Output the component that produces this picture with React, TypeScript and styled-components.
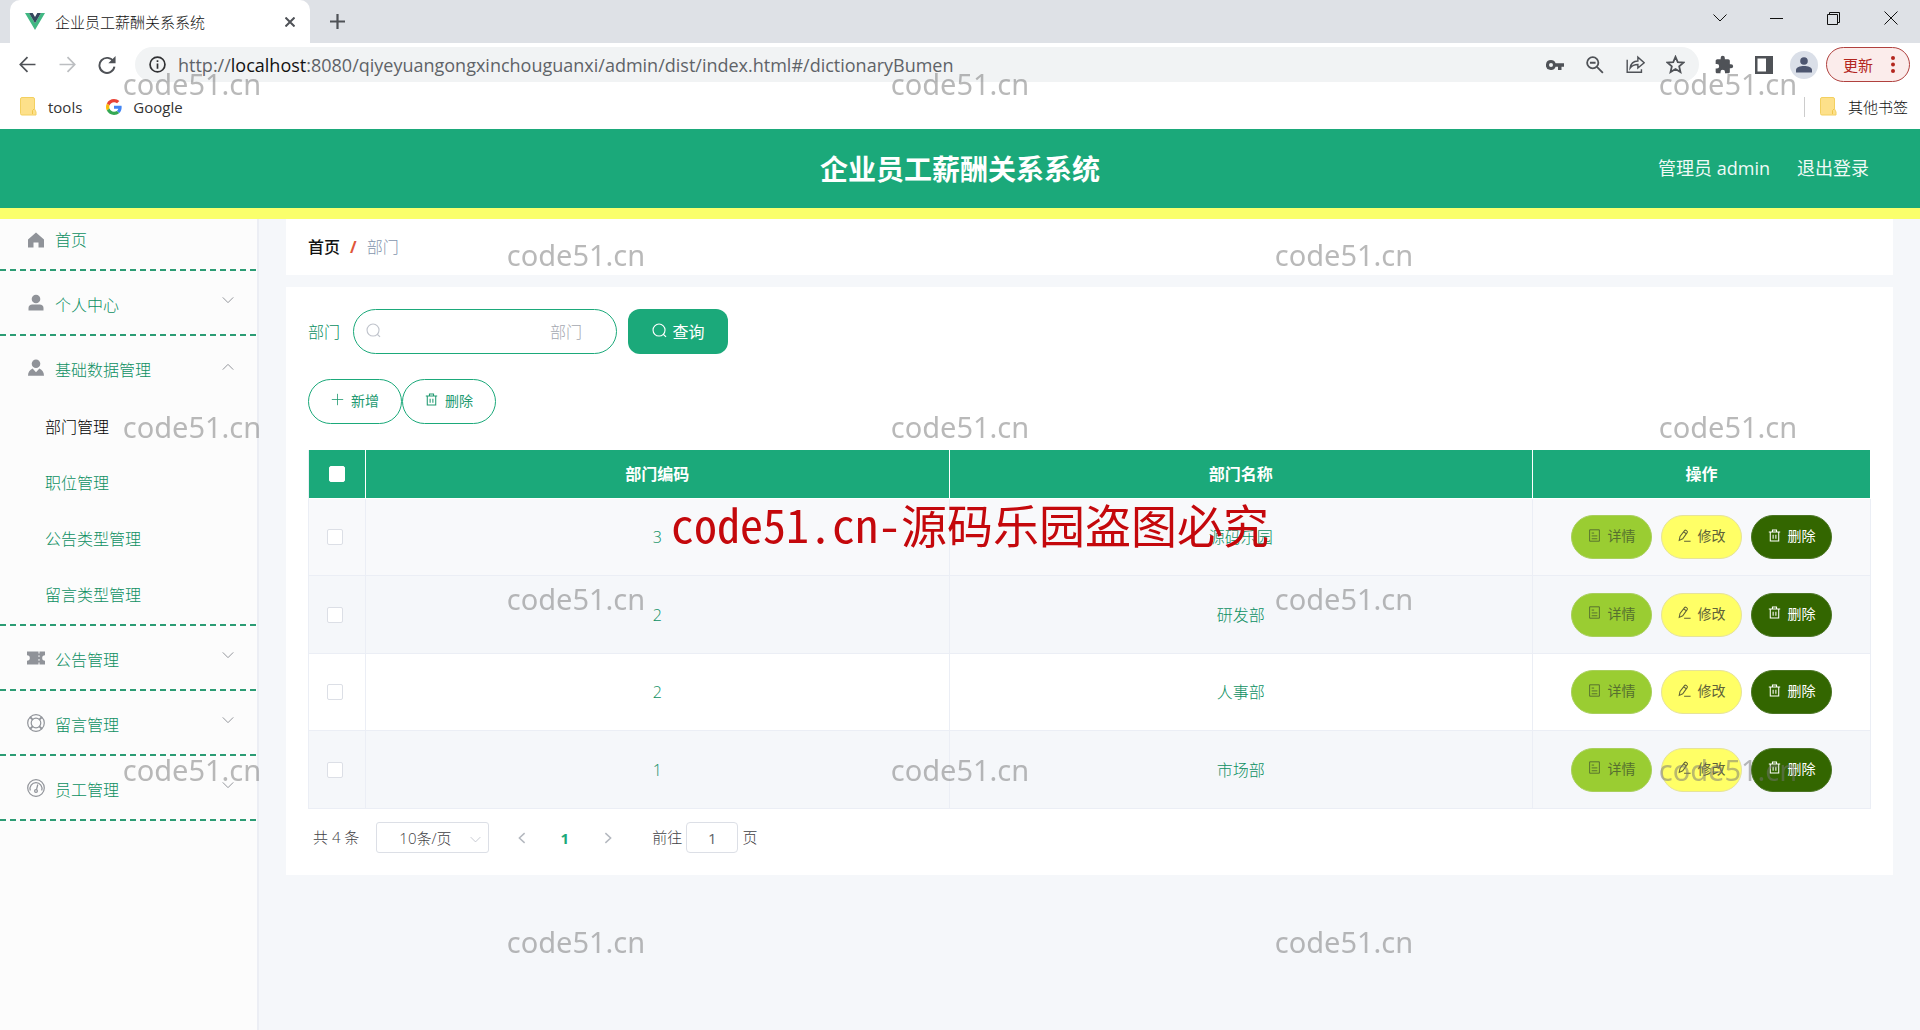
import React from "react";
import styled, { createGlobalStyle, css } from "styled-components";

const GREEN = "#1ba97a";
const TEXT_GREEN = "#0c8f62";
const FONT = '"Open Sans", "Noto Sans CJK SC", sans-serif';

const GlobalStyle = createGlobalStyle`
  *, *::before, *::after { box-sizing: border-box; }
  body { margin: 0; font-family: ${FONT}; font-size: 16px; color: #303133; background: #f5f7fa; }
  button, input, select { font-family: inherit; }
  button { cursor: pointer; padding: 0; border: 0; background: none; color: inherit; }
  a { color: inherit; text-decoration: none; }
  svg { display: block; flex: none; }
`;

const Page = styled.div`
  min-height: 100vh;
  display: flex;
  flex-direction: column;
  line-height: 24px;
`;

/* ---------- browser window ---------- */

const TabStrip = styled.div`
  display: flex;
  height: 43px;
  padding-left: 10px;
  background: #dee1e6;
`;

const Tab = styled.div`
  display: flex;
  align-items: center;
  width: 300px;
  padding: 0 12px 0 15px;
  gap: 10px;
  border-radius: 10px 10px 0 0;
  background: #fff;
`;

const TabTitle = styled.span`
  flex: 1;
  font-size: 15px;
  font-weight: 300;
  color: #111;
`;

const IconButton = styled.button<{ $w?: number; $color?: string }>`
  display: flex;
  align-items: center;
  justify-content: center;
  width: ${(p) => p.$w ?? 40}px;
  color: ${(p) => p.$color ?? "#4f5257"};
`;

const WindowButtons = styled.div`
  display: flex;
  height: 36px;
  margin-left: auto;
`;

const Toolbar = styled.div`
  display: flex;
  align-items: center;
  height: 45px;
  padding: 0 10px 2px 7px;
  background: #fff;
`;

const AddressBar = styled.div`
  display: flex;
  flex: 1;
  align-items: center;
  height: 35px;
  margin: 0 5px 0 8px;
  padding: 0 4px 0 14px;
  gap: 12px;
  border-radius: 18px;
  background: #f1f3f4;
`;

const Url = styled.div`
  flex: 1;
  font-size: 18px;
  color: #5f6368;
  white-space: nowrap;

  b { font-weight: 400; color: #111; }
`;

const AddressIcons = styled.div`
  display: flex;
`;

const Avatar = styled.span`
  display: grid;
  place-items: center;
  width: 28px;
  height: 28px;
  border-radius: 50%;
  background: #dadfe8;
  color: #4d5670;
`;

const UpdateButton = styled.button`
  display: flex;
  align-items: center;
  justify-content: space-between;
  width: 84px;
  height: 35px;
  margin-left: 2px;
  padding: 0 14px 0 16px;
  border: 1px solid #b0413e;
  border-radius: 18px;
  background: #fbeceb;
  color: #b3261e;
  font-size: 15px;
`;

const Bookmarks = styled.nav`
  display: flex;
  align-items: center;
  height: 41px;
  padding: 0 12px 4px 20px;
  gap: 24px;
  background: #fff;
`;

const Bookmark = styled.a<{ $last?: boolean }>`
  display: flex;
  align-items: center;
  gap: 11px;
  font-size: 15px;
  color: #333;
  ${(p) =>
    p.$last &&
    css`
      margin-left: auto;
      padding-left: 15px;
      border-left: 1px solid #ccc;
      font-weight: 300;
      line-height: 20px;
      color: #111;
    `}
`;

/* ---------- application ---------- */

const Header = styled.header`
  display: grid;
  grid-template-columns: 1fr auto 1fr;
  align-items: center;
  height: 90px;
  padding: 0 51px;
  border-bottom: 11px solid #faff6b;
  background: ${GREEN};
  color: #fff;
`;

const Title = styled.h1`
  grid-column: 2;
  margin: 0;
  font-size: 28px;
  line-height: 40px;
  font-weight: 700;
`;

const Account = styled.div`
  display: flex;
  justify-content: flex-end;
  padding-bottom: 2px;
  gap: 27px;
  font-size: 18px;
  line-height: 28px;
  color: #effaf6;
`;

const Body = styled.div`
  display: flex;
  flex: 1;
`;

const Sidebar = styled.nav`
  width: 259px;
  border-right: 2px solid #eceef4;
  background: #fcfcfc;
  color: ${TEXT_GREEN};
  font-weight: 300;
`;

const MenuGroup = styled.div`
  padding-bottom: 2px;
  background: repeating-linear-gradient(90deg, #2c9c74 0 6px, transparent 6px 10px) bottom left / 100% 2px no-repeat;
`;

const entry = css`
  display: flex;
  align-items: center;
  width: 100%;
  padding: 0 23px 0 26px;
  gap: 9px;
  font-size: 16px;
  font-weight: 300;
  text-align: left;
`;

const HomeLink = styled.a`
  ${entry}
  height: 50px;
  padding-bottom: 8px;
`;

const MenuButton = styled.button`
  ${entry}
  height: 63px;
`;

const MenuIcon = styled.span`
  color: #909399;
`;

const MenuText = styled.span`
  flex: 1;
  padding-top: 2px;
`;

const Caret = styled.span<{ $open?: boolean }>`
  padding-bottom: ${(p) => (p.$open ? 2 : 6)}px;
  color: #909399;
`;

const SubMenu = styled.div`
  padding-bottom: 1px;
`;

const SubLink = styled.a<{ $active?: boolean }>`
  display: block;
  padding-left: 45px;
  line-height: 56px;
  ${(p) => p.$active && "color: #000;"}
`;

const Main = styled.main`
  flex: 1;
  min-width: 0;
  padding: 0 27px;
`;

const Crumbs = styled.nav`
  display: flex;
  align-items: center;
  height: 56px;
  margin-bottom: 12px;
  padding: 0 22px;
  gap: 10px;
  background: #fff;

  a { font-weight: 500; color: #111; }
  i { font-style: normal; font-weight: 700; color: #e0563a; }
  span { font-weight: 300; color: #8495ad; }
`;

const Card = styled.section`
  padding: 22px;
  background: #fff;
`;

const SearchForm = styled.form`
  display: flex;
  align-items: center;
  height: 45px;
  margin-bottom: 25px;
`;

const FieldLabel = styled.label`
  margin-right: 13px;
  color: ${TEXT_GREEN};
  font-weight: 300;
`;

const Field = styled.div`
  position: relative;
  width: 264px;
  margin-right: 11px;
  color: #c0c4cc;

  svg { position: absolute; left: 13px; top: 14px; }
`;

const SearchInput = styled.input`
  width: 100%;
  height: 45px;
  padding: 0 34px;
  border: 1px solid ${GREEN};
  border-radius: 23px;
  background: transparent;
  font-size: 16px;
  text-align: right;
  outline: 0;

  &::placeholder { color: #a4a8b0; font-weight: 300; }
`;

const QueryButton = styled.button`
  display: flex;
  align-items: center;
  justify-content: center;
  width: 100px;
  height: 45px;
  padding-bottom: 2px;
  gap: 6px;
  border-radius: 12px;
  background: ${GREEN};
  color: #fff;
  font-size: 16px;
`;

const Actions = styled.div`
  display: flex;
  margin-bottom: 26px;
`;

const OutlineButton = styled.button`
  display: flex;
  align-items: center;
  justify-content: center;
  width: 94px;
  height: 45px;
  padding-bottom: 4px;
  gap: 7px;
  border: 1px solid ${GREEN};
  border-radius: 23px;
  background: #fff;
  color: #219a71;
  font-size: 14px;
`;

const Table = styled.table`
  width: 100%;
  table-layout: fixed;
  border-collapse: separate;
  border-spacing: 0;
  border-left: 1px solid #ebeef5;
  text-align: center;
`;

const HeadCell = styled.th<{ $w?: number }>`
  width: ${(p) => (p.$w ? `${p.$w}px` : "auto")};
  height: 49px;
  padding: 0;
  border-right: 1px solid #fff;
  border-bottom: 1px solid #fff;
  background: ${GREEN};
  color: #fff;
  font-weight: 700;
`;

const Cell = styled.td`
  height: 77px;
  padding: 0;
  border-right: 1px solid #ebeef5;
  border-bottom: 1px solid #ebeef5;
  color: ${TEXT_GREEN};
  font-weight: 300;
`;

const Row = styled.tr<{ $bg: string }>`
  background: ${(p) => p.$bg};

  &:nth-child(even) ${Cell} { height: 78px; }
`;

const Check = styled.input`
  appearance: none;
  display: block;
  width: 16px;
  height: 16px;
  margin: 0 0 0 18px;
  border: 1px solid #dcdfe6;
  border-radius: 2px;
  background: #fff;

  th & { margin-left: 20px; border-color: #fff; }
`;

const RowActions = styled.div`
  display: flex;
  justify-content: center;
  gap: 9px;
`;

const PillButton = styled.button<{ $bg: string; $fg: string; $line: string }>`
  display: flex;
  align-items: center;
  justify-content: center;
  width: 81px;
  height: 44px;
  padding-bottom: 4px;
  gap: 7px;
  border: 1px solid ${(p) => p.$line};
  border-radius: 22px;
  background: ${(p) => p.$bg};
  color: ${(p) => p.$fg};
  font-size: 14px;
`;

const Pagination = styled.div`
  display: flex;
  align-items: center;
  margin-top: 13px;
  padding-left: 5px;
  font-size: 15px;
  line-height: 31px;
  color: #3f4144;
  font-weight: 300;
`;

const SizeSelect = styled.div`
  position: relative;
  width: 113px;
  margin: 0 11px 0 17px;
  color: #c0c4cc;

  select {
    appearance: none;
    display: block;
    width: 100%;
    height: 31px;
    padding: 0 22px;
    border: 1px solid #dcdfe6;
    border-radius: 3px;
    background: #fff;
    color: #3f4144;
    font-size: 15px;
    font-weight: 300;
  }
  svg { position: absolute; right: 8px; top: 12px; }
`;

const PageButton = styled.button<{ $active?: boolean }>`
  display: flex;
  align-items: center;
  justify-content: center;
  width: 43px;
  height: 31px;
  color: ${(p) => (p.$active ? GREEN : "#b4b8bf")};
  font-size: 15px;
  font-weight: 700;
`;

const JumpLabel = styled.label`
  display: flex;
  align-items: center;
  margin-left: 23px;
  gap: 4px;

  input {
    width: 52px;
    height: 31px;
    border: 1px solid #dcdfe6;
    border-radius: 4px;
    text-align: center;
    color: #606266;
    font-size: 15px;
  }
`;

/* ---------- watermark ---------- */

const Watermark = styled.div`
  position: fixed;
  inset: -2px 0 2px;
  display: grid;
  grid-template: repeat(6, 1fr) / repeat(5, 1fr);
  place-items: center;
  pointer-events: none;
  font-family: "Noto Sans", sans-serif;
  font-size: 29px;
  color: rgba(115, 115, 115, 0.5);
`;

const Notice = styled.div`
  position: fixed;
  inset: 16px 0 0 20px;
  display: flex;
  align-items: center;
  justify-content: center;
  pointer-events: none;
  font-family: "Noto Sans Mono CJK SC", "Noto Sans CJK SC", monospace;
  font-size: 46px;
  color: #c4080c;
`;

/* ---------- icons ---------- */

type IconProps = { size?: number; width?: number; fill?: boolean; box?: number; children: React.ReactNode };

const Icon = ({ size = 16, width = 1, fill, box = 16, children }: IconProps) => (
  <svg
    width={size}
    height={size}
    viewBox={`0 0 ${box} ${box}`}
    fill={fill ? "currentColor" : "none"}
    stroke={fill ? "none" : "currentColor"}
    strokeWidth={width}
    aria-hidden="true"
  >
    {children}
  </svg>
);

const SearchIcon = () => (
  <Icon size={15} width={1.2}>
    <circle cx="7.5" cy="7.5" r="6.4" />
    <path d="M12 12l3 2.8" />
  </Icon>
);

const TrashIcon = () => (
  <Icon size={13} width={1.3}>
    <path d="M1 3.8h14M5.5 3.5V1.2h5v2.3M2.8 3.8v11h10.4v-11M6.3 7v5M9.7 7v5" />
  </Icon>
);

const DetailIcon = () => (
  <Icon size={13} width={1.2}>
    <path d="M2 1h12v14H2zM4.5 5h3M4.5 8.500h7M4.500 12h7" />
  </Icon>
);

const EditIcon = () => (
  <Icon size={13} width={1.3}>
    <path d="M1.500 14l1-4.800L8.300 1.700c.8-1 4 1.200 3.200 2.400L5.800 12l-4.300 2zM7.500 15h8M7 3.500l3.200 2.300" />
  </Icon>
);

const CaretIcon = ({ up, size = 12 }: { up?: boolean; size?: number }) => (
  <Icon size={size} width={1.3}>
    <path d={up ? "M1 11.500L8 4.500l7 7" : "M1 4.500l7 7 7-7"} />
  </Icon>
);

const Folder = () => (
  <svg width="17" height="19" viewBox="0 0 17 19" aria-hidden="true">
    <path d="M2 .5h11a1.500 1.500 0 0 1 1.500 1.500v10l1.500 3v3H2A1.500 1.500 0 0 1 .5 16.500V2A1.500 1.500 0 0 1 2 .5z" fill="#fde08a" stroke="#f3d060" />
    <path d="M12.500 17v-3.500l1.500-1.500" fill="none" stroke="#efc64a" />
  </svg>
);

const VueLogo = () => (
  <svg width="20" height="17" viewBox="0 0 20 17" aria-hidden="true">
    <path d="M0 0h4l6 10.300L16 0h4L10 17z" fill="#41b883" />
    <path d="M4 0h3.700L10 4l2.300-4H16l-6 10.300z" fill="#34495e" />
  </svg>
);

const GoogleLogo = () => (
  <svg width="16" height="16" viewBox="0 0 48 48" aria-hidden="true">
    <path fill="#EA4335" d="M24 9.500c3.540 0 6.710 1.220 9.210 3.600l6.850-6.850C35.900 2.380 30.470 0 24 0 14.620 0 6.510 5.380 2.560 13.220l7.980 6.190C12.430 13.720 17.740 9.500 24 9.500z" />
    <path fill="#4285F4" d="M46.980 24.550c0-1.570-.15-3.090-.38-4.550H24v9.020h12.940c-.58 2.960-2.260 5.480-4.780 7.180l7.730 6c4.510-4.180 7.090-10.360 7.090-17.650z" />
    <path fill="#FBBC05" d="M10.530 28.590c-.48-1.450-.76-2.990-.76-4.590s.27-3.140.76-4.590l-7.980-6.190C.92 16.460 0 20.120 0 24c0 3.880.92 7.540 2.560 10.780l7.970-6.190z" />
    <path fill="#34A853" d="M24 48c6.480 0 11.930-2.130 15.890-5.810l-7.730-6c-2.150 1.450-4.920 2.300-8.160 2.300-6.260 0-11.570-4.220-13.470-9.910l-7.980 6.190C6.510 42.620 14.620 48 24 48z" />
  </svg>
);

const menuIcons = {
  home: (
    <Icon size={20} box={20} fill>
      <path d="M10 2.500l8 7V17.500h-5.500v-5h-5v5H2v-8z" />
    </Icon>
  ),
  user: (
    <Icon size={20} box={20} fill>
      <circle cx="10" cy="6" r="4.300" />
      <path d="M2.500 17.500v-2.500c0-2.200 1.600-3.500 3.800-3.500h7.400c2.200 0 3.800 1.300 3.800 3.500v2.500z" />
    </Icon>
  ),
  custom: (
    <Icon size={20} box={20} fill>
      <circle cx="10" cy="5.800" r="4.300" />
      <path d="M2 17.800c0-3.600 1.800-5.900 4.600-7.300L10 14.300l3.400-3.800c2.800 1.400 4.600 3.700 4.600 7.300z" />
    </Icon>
  ),
  ticket: (
    <Icon size={20} box={20} fill>
      <path d="M1 3.500h11.500v2h1v-2H19v3.700a2.800 2.800 0 0 0 0 5.600v3.700h-5.500v-2h-1v2H1v-3.700a2.800 2.800 0 0 0 0-5.600zM12.500 7.300v1.800h1V7.300zM12.500 11v1.800h1V11z" />
    </Icon>
  ),
  help: (
    <Icon size={20} box={20} width={1.200}>
      <circle cx="10" cy="10" r="8.300" />
      <circle cx="10" cy="10" r="4.800" />
      <path d="M4 4.500l2.500 2.300M4.500 4l2.300 2.500M16 4.500l-2.500 2.300M15.500 4l-2.300 2.500M4 15.500l2.500-2.300M4.500 16l2.300-2.500M16 15.500l-2.500-2.300M15.500 16l-2.300-2.500" />
    </Icon>
  ),
  meter: (
    <Icon size={20} box={20} width={1.200}>
      <circle cx="10" cy="10" r="8.300" />
      <path d="M4.300 12.500a6 6 0 1 1 11.400 0" />
      <path d="M11.800 6.500l-1.300 5.200" />
      <circle cx="10" cy="13" r="1.400" />
    </Icon>
  ),
};

/* ---------- data ---------- */

type MenuItem = { icon: keyof typeof menuIcons; text: string; children?: string[] };

const menu: MenuItem[] = [
  { icon: "user", text: "个人中心" },
  { icon: "custom", text: "基础数据管理", children: ["部门管理", "职位管理", "公告类型管理", "留言类型管理"] },
  { icon: "ticket", text: "公告管理" },
  { icon: "help", text: "留言管理" },
  { icon: "meter", text: "员工管理" },
];

const rows = [
  { code: 3, name: "源码乐园", bg: "#f8f9fb" },
  { code: 2, name: "研发部", bg: "#f5f7fa" },
  { code: 2, name: "人事部", bg: "#fff" },
  { code: 1, name: "市场部", bg: "#f5f7fa" },
];

const Browser = () => (
  <>
    <TabStrip>
      <Tab>
        <VueLogo />
        <TabTitle>企业员工薪酬关系系统</TabTitle>
        <IconButton $w={16} aria-label="关闭标签页">
          <Icon size={10} box={10} width={2}><path d="M.5.5l9 9M9.500.5l-9 9" /></Icon>
        </IconButton>
      </Tab>
      <IconButton $w={54} aria-label="新标签页">
        <Icon size={15} box={15} width={2.200}><path d="M7.500 0v15M0 7.500h15" /></Icon>
      </IconButton>
      <WindowButtons>
        <IconButton $w={57} $color="#111" aria-label="搜索标签页">
          <Icon size={14} box={14}><path d="M.5 3.500L7 10l6.500-6.500" /></Icon>
        </IconButton>
        <IconButton $w={57} $color="#111" aria-label="最小化">
          <Icon size={13} box={13}><path d="M0 6.500h13" /></Icon>
        </IconButton>
        <IconButton $w={57} $color="#111" aria-label="还原">
          <Icon size={13} box={13}><path d="M.5 2.500h10v10H.5zM2.500 2.500V.5h10v10h-2" /></Icon>
        </IconButton>
        <IconButton $w={58} $color="#111" aria-label="关闭">
          <Icon size={14} box={14}><path d="M.5.5l13 13M13.500.5l-13 13" /></Icon>
        </IconButton>
      </WindowButtons>
    </TabStrip>
    <Toolbar>
      <IconButton aria-label="后退">
        <Icon size={17} width={1.600}><path d="M15.500 8H1.500M8 1L1.200 8 8 15" /></Icon>
      </IconButton>
      <IconButton $color="#bcbec1" aria-label="前进">
        <Icon size={17} width={1.600}><path d="M.5 8h14M8 1l6.800 7L8 15" /></Icon>
      </IconButton>
      <IconButton aria-label="刷新">
        <Icon size={18} width={1.700}>
          <path d="M13.800 5A6.700 6.700 0 1 0 14.600 9.500" />
          <path d="M15.600 0v6.500H9.200z" fill="currentColor" stroke="none" />
        </Icon>
      </IconButton>
      <AddressBar>
        <Icon size={17} width={1.600}>
          <circle cx="8" cy="8" r="7" />
          <path d="M8 7v5M8 4v1.700" />
        </Icon>
        <Url>http://<b>localhost</b>:8080/qiyeyuangongxinchouguanxi/admin/dist/index.html#/dictionaryBumen</Url>
        <AddressIcons>
          <IconButton aria-label="密码">
            <Icon size={18} box={18} fill>
              <path d="M5 4a5 5 0 1 0 4.600 6.800H12V14h3.500v-3.200H18V7.200H9.600A5 5 0 0 0 5 4zm0 3a2 2 0 1 1 0 4 2 2 0 0 1 0-4z" fillRule="evenodd" />
            </Icon>
          </IconButton>
          <IconButton aria-label="缩放">
            <Icon size={18} width={1.600}>
              <circle cx="6" cy="6" r="5" />
              <path d="M9.700 9.700l5.300 5.300M3.500 6h5" />
            </Icon>
          </IconButton>
          <IconButton aria-label="分享">
            <Icon size={19} width={1.200}>
              <path d="M1 4v10.500h12V12M3.500 11C4 7 6.500 5 10 5V1.800L15.300 6.500 10 11V8C7 8 5 9 3.500 11z" />
            </Icon>
          </IconButton>
          <IconButton aria-label="收藏">
            <Icon size={19} width={1.500}>
              <path d="M8 1.500l1.900 4.500 4.900.4-3.700 3.200 1.100 4.800L8 11.800l-4.200 2.600 1.100-4.800L1.200 6.400 6.100 6z" />
            </Icon>
          </IconButton>
        </AddressIcons>
      </AddressBar>
      <IconButton aria-label="扩展程序">
        <Icon size={20} box={24} fill>
          <path d="M20.500 11H19V7c0-1.100-.9-2-2-2h-4V3.500a2.500 2.500 0 0 0-5 0V5H4c-1.100 0-2 .9-2 2v3.800h1.500a2.700 2.700 0 0 1 0 5.400H2V20c0 1.100.9 2 2 2h3.800v-1.500a2.700 2.700 0 0 1 5.400 0V22H17c1.100 0 2-.9 2-2v-4h1.500a2.500 2.500 0 0 0 0-5z" />
        </Icon>
      </IconButton>
      <IconButton aria-label="侧边栏">
        <Icon size={18} box={18} fill>
          <path d="M0 0h18v18H0zM2.500 2.500v13H11v-13z" fillRule="evenodd" />
        </Icon>
      </IconButton>
      <IconButton aria-label="个人资料">
        <Avatar>
          <Icon size={16} fill>
            <circle cx="8" cy="4" r="3.800" />
            <path d="M0 15.500V13c0-2.600 4-4 8-4s8 1.400 8 4v2.500z" />
          </Icon>
        </Avatar>
      </IconButton>
      <UpdateButton>
        更新
        <svg width="4" height="17" viewBox="0 0 4 17" fill="currentColor" aria-hidden="true">
          <circle cx="2" cy="2" r="2" />
          <circle cx="2" cy="8.500" r="2" />
          <circle cx="2" cy="15" r="2" />
        </svg>
      </UpdateButton>
    </Toolbar>
    <Bookmarks>
      <Bookmark href="#tools"><Folder />tools</Bookmark>
      <Bookmark href="#google"><GoogleLogo />Google</Bookmark>
      <Bookmark href="#other" $last><Folder />其他书签</Bookmark>
    </Bookmarks>
  </>
);

export default function App() {
  return (
    <Page>
      <GlobalStyle />
      <Browser />
      <Header>
        <Title>企业员工薪酬关系系统</Title>
        <Account>
          <span>管理员 admin</span>
          <a href="#logout">退出登录</a>
        </Account>
      </Header>
      <Body>
        <Sidebar>
          <MenuGroup>
            <HomeLink href="#home">
              <MenuIcon>{menuIcons.home}</MenuIcon>首页
            </HomeLink>
          </MenuGroup>
          {menu.map((item) => (
            <MenuGroup key={item.text}>
              <MenuButton type="button" aria-expanded={!!item.children}>
                <MenuIcon>{menuIcons[item.icon]}</MenuIcon>
                <MenuText>{item.text}</MenuText>
                <Caret $open={!!item.children}><CaretIcon up={!!item.children} /></Caret>
              </MenuButton>
              {item.children && (
                <SubMenu>
                  {item.children.map((text, i) => (
                    <SubLink key={text} href={`#menu-${i}`} $active={i === 0}>{text}</SubLink>
                  ))}
                </SubMenu>
              )}
            </MenuGroup>
          ))}
        </Sidebar>
        <Main>
          <Crumbs>
            <a href="#home">首页</a>
            <i>/</i>
            <span>部门</span>
          </Crumbs>
          <Card>
            <SearchForm onSubmit={(e) => e.preventDefault()}>
              <FieldLabel htmlFor="department">部门</FieldLabel>
              <Field>
                <SearchIcon />
                <SearchInput id="department" placeholder="部门" />
              </Field>
              <QueryButton type="submit"><SearchIcon />查询</QueryButton>
            </SearchForm>
            <Actions>
              <OutlineButton type="button">
                <Icon size={13}><path d="M8 1v14M1 8h14" /></Icon>新增
              </OutlineButton>
              <OutlineButton type="button"><TrashIcon />删除</OutlineButton>
            </Actions>
            <Table>
              <thead>
                <tr>
                  <HeadCell $w={57}><Check type="checkbox" aria-label="全选" /></HeadCell>
                  <HeadCell>部门编码</HeadCell>
                  <HeadCell>部门名称</HeadCell>
                  <HeadCell $w={338}>操作</HeadCell>
                </tr>
              </thead>
              <tbody>
                {rows.map((row) => (
                  <Row key={row.name} $bg={row.bg}>
                    <Cell><Check type="checkbox" aria-label={`选择${row.name}`} /></Cell>
                    <Cell>{row.code}</Cell>
                    <Cell>{row.name}</Cell>
                    <Cell>
                      <RowActions>
                        <PillButton type="button" $bg="#9acd32" $fg="#56702f" $line="#a9cf5c"><DetailIcon />详情</PillButton>
                        <PillButton type="button" $bg="#ffff66" $fg="#606238" $line="#e6e39a"><EditIcon />修改</PillButton>
                        <PillButton type="button" $bg="#336600" $fg="#fff" $line="#4b7524"><TrashIcon />删除</PillButton>
                      </RowActions>
                    </Cell>
                  </Row>
                ))}
              </tbody>
            </Table>
            <Pagination>
              <span>共 4 条</span>
              <SizeSelect>
                <select aria-label="每页条数" defaultValue="10">
                  <option value="10">10条/页</option>
                </select>
                <CaretIcon size={11} />
              </SizeSelect>
              <PageButton type="button" aria-label="上一页">
                <Icon size={12} width={2}><path d="M11.500 1.500L4.500 8l7 6.500" /></Icon>
              </PageButton>
              <PageButton type="button" $active>1</PageButton>
              <PageButton type="button" aria-label="下一页">
                <Icon size={12} width={2}><path d="M4.500 1.500l7 6.500-7 6.500" /></Icon>
              </PageButton>
              <JumpLabel>
                前往<input defaultValue="1" />页
              </JumpLabel>
            </Pagination>
          </Card>
        </Main>
      </Body>
      <Watermark aria-hidden="true">
        {Array.from({ length: 30 }, (_, i) => {
          const shown = (Math.floor(i / 5) + (i % 5)) % 2 === 0;
          return <span key={i}>{shown && "code51.cn"}</span>;
        })}
      </Watermark>
      <Notice>code51.cn-源码乐园盗图必究</Notice>
    </Page>
  );
}
